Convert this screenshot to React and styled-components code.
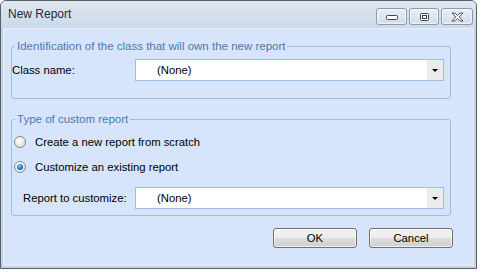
import React from "react";
import styled, { createGlobalStyle } from "styled-components";

const GlobalStyle = createGlobalStyle`
  html, body {
    margin: 0;
    padding: 0;
    background: #ffffff;
  }
  body {
    font-family: "Liberation Sans", Arial, sans-serif;
    font-size: 11.3px;
    color: #000;
  }
`;

const Window = styled.div`
  box-sizing: border-box;
  width: 477px;
  height: 269px;
  border: 1px solid #5a5f66;
  border-radius: 6px 6px 0 0;
  background: #c4d3e4;
  display: flex;
  flex-direction: column;
  padding: 0 2px 2px 2px;
`;

const TitleBar = styled.div`
  height: 27px;
  display: flex;
  align-items: center;
  border-radius: 5px 5px 0 0;
  background: linear-gradient(#dfe8f2, #cbd9e8);
  margin: 0 -2px;
  padding-left: 7px;
  padding-right: 3px;
`;

const Title = styled.div`
  flex: 1;
  font-size: 12px;
  color: #1f2a36;
  margin-top: -1px;
`;

const CaptionButtons = styled.div`
  display: flex;
  gap: 2px;
  align-self: flex-start;
  margin-top: 7px;
`;

const CaptionButton = styled.div`
  box-sizing: border-box;
  width: ${(p) => p.$w}px;
  height: 17px;
  border: 1px solid #8d9aaa;
  border-radius: 3px;
  background: linear-gradient(#e9eff5, #d3dde8);
  box-shadow: inset 0 0 0 1px rgba(255, 255, 255, 0.6);
  display: flex;
  align-items: center;
  justify-content: center;
`;

const Content = styled.div`
  flex: 1;
  background: #d6e5fb;
  border: 1px solid #e8eef6;
  padding: 10px 22px 0 7px;
  display: flex;
  flex-direction: column;
`;

const Group = styled.fieldset`
  margin: 0;
  padding: 0 6px ${(p) => p.$pb}px 0;
  border: 1px solid #9dbce6;
  border-radius: 3px;
  min-width: 0;
  & + & {
    margin-top: 13px;
  }
`;

const Legend = styled.legend`
  margin-left: 3px;
  padding: 0 2px;
  line-height: 14px;
  color: #4f78b0;
  font-size: 11.5px;
`;

const FieldRow = styled.div`
  display: flex;
  align-items: center;
  margin-top: ${(p) => p.$mt || 0}px;
`;

const Label = styled.div`
  box-sizing: border-box;
  width: ${(p) => p.$w}px;
  padding-left: ${(p) => p.$pl || 0}px;
`;

const Combo = styled.div`
  box-sizing: border-box;
  flex: 1;
  height: 22px;
  border: 1px solid #9dbce6;
  background: #fff;
  display: flex;
  align-items: stretch;
`;

const ComboText = styled.div`
  flex: 1;
  display: flex;
  align-items: center;
  padding-left: 21px;
`;

const DropButton = styled.div`
  width: 16px;
  background: #ececec;
  display: flex;
  align-items: center;
  justify-content: center;
`;

const Arrow = styled.div`
  width: 0;
  height: 0;
  border-left: 3px solid transparent;
  border-right: 3px solid transparent;
  border-top: 3px solid #000;
  margin-top: 1px;
`;

const RadioRow = styled.div`
  display: flex;
  align-items: center;
  height: 20px;
  padding-left: 2px;
  margin-top: ${(p) => p.$mt}px;
`;

const RadioCircle = styled.span`
  box-sizing: border-box;
  width: 12px;
  height: 12px;
  border-radius: 50%;
  border: 1px solid #8b8b8b;
  background: radial-gradient(circle at 40% 35%, #ffffff 0%, #f0f0f0 40%, #cfcfcf 100%);
  display: flex;
  align-items: center;
  justify-content: center;
  margin-right: 9px;
  &::after {
    content: "";
    display: ${(p) => (p.$checked ? "block" : "none")};
    width: 6px;
    height: 6px;
    border-radius: 50%;
    background: radial-gradient(circle at 40% 35%, #8fd0ff 0%, #2a7fd6 45%, #0b3f87 100%);
  }
`;

const Footer = styled.div`
  display: flex;
  justify-content: flex-end;
  gap: 12px;
  margin-top: 12px;
  margin-right: -2px;
`;

const Button = styled.div`
  box-sizing: border-box;
  width: 84px;
  height: 20px;
  border: 1px solid #707070;
  border-radius: 3px;
  background: linear-gradient(#f2f2f2 0%, #ebebeb 50%, #dddddd 51%, #cfcfcf 100%);
  box-shadow: inset 0 0 0 1px rgba(255, 255, 255, 0.7);
  display: flex;
  align-items: center;
  justify-content: center;
`;

const MinIcon = () => (
  <svg width="12" height="6" viewBox="0 0 12 6">
    <rect x="0.5" y="1.5" width="11" height="4" rx="1" fill="#fff" stroke="#3b4654" />
  </svg>
);

const RestoreIcon = () => (
  <svg width="9" height="8" viewBox="0 0 9 8">
    <rect x="0.5" y="0.5" width="8" height="7" rx="1" fill="#fff" stroke="#3b4654" />
    <rect x="2.5" y="2.5" width="4" height="3" fill="none" stroke="#3b4654" />
  </svg>
);

const CloseIcon = () => (
  <svg width="13" height="10" viewBox="0 0 13 10">
    <path
      d="M1 1 L4 1 L6.5 3.5 L9 1 L12 1 L8.2 5 L12 9 L9 9 L6.5 6.5 L4 9 L1 9 L4.8 5 Z"
      fill="#fff"
      stroke="#3b4654"
      strokeWidth="0.9"
      strokeLinejoin="round"
    />
  </svg>
);

const ComboBox = ({ value }) => (
  <Combo>
    <ComboText>{value}</ComboText>
    <DropButton>
      <Arrow />
    </DropButton>
  </Combo>
);

export default function App() {
  return (
    <>
      <GlobalStyle />
      <Window>
        <TitleBar>
          <Title>New Report</Title>
          <CaptionButtons>
            <CaptionButton $w={31}>
              <MinIcon />
            </CaptionButton>
            <CaptionButton $w={30}>
              <RestoreIcon />
            </CaptionButton>
            <CaptionButton $w={32}>
              <CloseIcon />
            </CaptionButton>
          </CaptionButtons>
        </TitleBar>
        <Content>
          <Group $pb={17}>
            <Legend>Identification of the class that will own the new report</Legend>
            <FieldRow $mt={6}>
              <Label $w={123}>Class name:</Label>
              <ComboBox value="(None)" />
            </FieldRow>
          </Group>
          <Group $pb={6}>
            <Legend>Type of custom report</Legend>
            <RadioRow $mt={6}>
              <RadioCircle />
              Create a new report from scratch
            </RadioRow>
            <RadioRow $mt={5}>
              <RadioCircle $checked />
              Customize an existing report
            </RadioRow>
            <FieldRow $mt={10}>
              <Label $w={123} $pl={11}>
                Report to customize:
              </Label>
              <ComboBox value="(None)" />
            </FieldRow>
          </Group>
          <Footer>
            <Button>OK</Button>
            <Button>Cancel</Button>
          </Footer>
        </Content>
      </Window>
    </>
  );
}
